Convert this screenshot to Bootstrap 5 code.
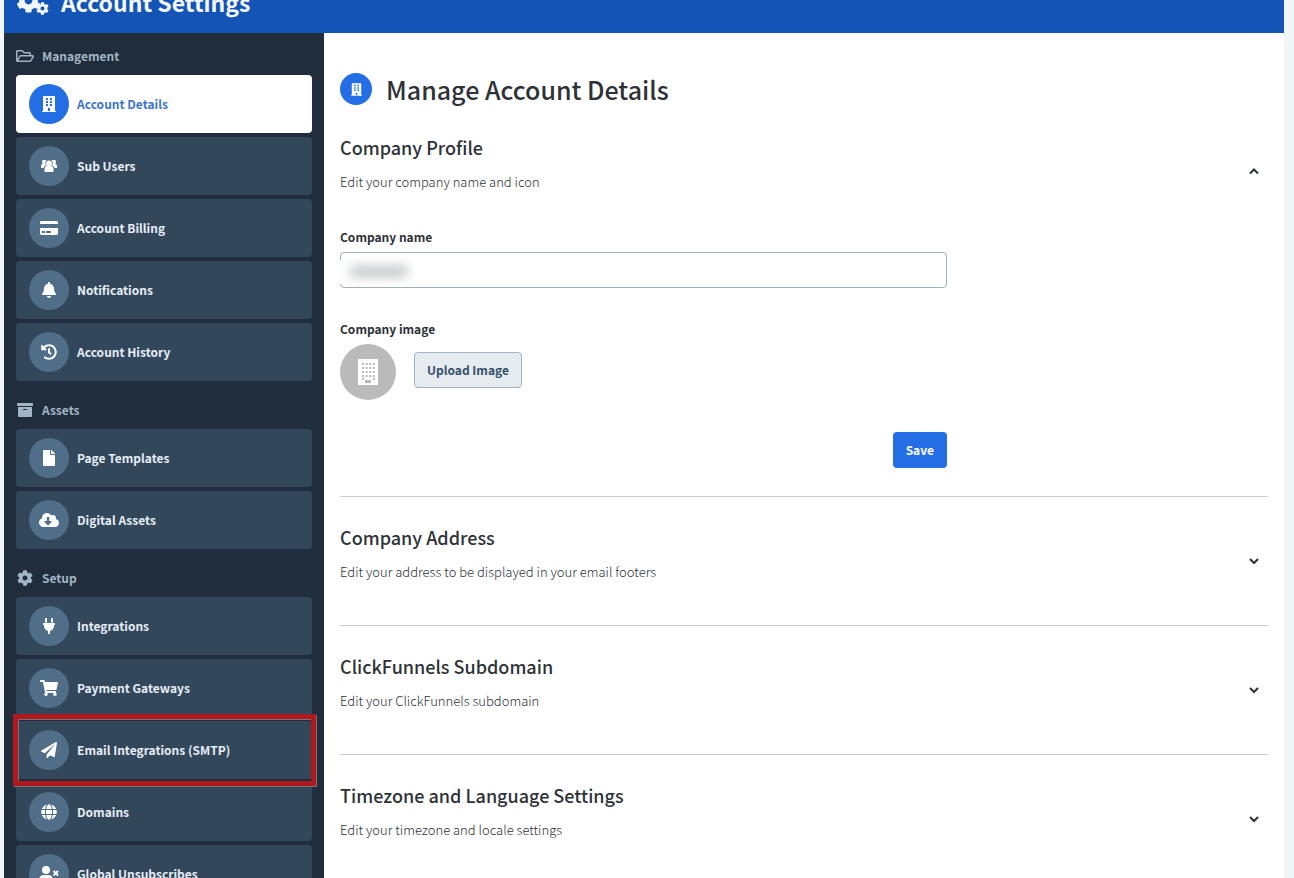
<!DOCTYPE html>
<html lang="en">
<head>
<meta charset="utf-8">
<meta name="viewport" content="width=device-width, initial-scale=1">
<title>Account Settings</title>
<link href="https://cdn.jsdelivr.net/npm/bootstrap@5.3.0/dist/css/bootstrap.min.css" rel="stylesheet">
<style>
  body { background: #f1f7f9; color: #2d3237; font: 400 12px/20px "Source Sans Pro", "Noto Sans CJK SC", sans-serif; }
  svg { fill: currentColor; flex: none; }
  .app-shell { margin: 0 10px 0 4px; background: #fff; }
  .app-header { height: 33px; background: #1554b7; color: #f4f9ff; padding: 0 13px 17px; overflow: hidden; }
  .app-title { font-size: 23px; line-height: 28px; font-weight: 700; }
  .side-panel { width: 320px; background: #1f2d3d; padding: 4px 12px 0; }
  .side-group { margin-bottom: 10px; }
  .side-label { height: 38px; font-weight: 700; color: #a3b5c4; gap: 8px; }
  .side-label svg { width: 18px; height: 16px; }
  .side-list { gap: 4px; }
  .side-link { height: 58px; padding: 0 13px; gap: 8px; border-radius: 4px; background: #33475b; color: #e4edf6; font-weight: 700; text-decoration: none; }
  .side-link:hover { color: #fff; }
  .side-link.active { background: #fff; color: #3b76cc; }
  .icon-disc { width: 40px; height: 40px; background: #506e88; color: #fff; }
  .icon-disc svg { height: 16px; width: 20px; }
  .active .icon-disc, .title-disc { background: #236ee4; }
  .callout-frame { inset: -7px -4px -7px -3px; border: 5px solid #b01a1e; box-shadow: 1px 1px 0 #7b7377, inset 1px 1px 0 #7b7377; pointer-events: none; z-index: 1; }
  .main-panel { padding: 40px 16px 0; min-width: 0; }
  .title-row { gap: 14px; margin-bottom: 2px; }
  .title-disc { width: 32px; height: 32px; color: #fff; }
  .page-title { font-size: 25px; line-height: 32px; font-weight: 500; }
  .fold { padding: 8px 0; border-top: 1px solid #cbcdd0; }
  .fold:first-of-type { border-top: 0; padding-bottom: 28px; }
  .fold-toggle { height: 112px; padding: 18px 8px 0 0; color: inherit; }
  .fold-title { font-size: 18px; line-height: 28px; font-weight: 500; margin-bottom: 11px; }
  .fold-note { font-size: 13px; line-height: 20px; font-weight: 300; }
  .fold-toggle svg { margin-top: 32px; }
  .profile-form { max-width: 607px; }
  .field-label { font-weight: 700; margin-bottom: 5px; }
  .field-wrap { margin-bottom: 31px; }
  .field-box { height: 36px; border: 1px solid #9fb0bd; border-radius: 4px; font-size: 12px; }
  .redacted { left: -2px; top: 8px; width: 76px; height: 24px; background: #fcfdfd; }
  .redacted::after { content: ""; position: absolute; inset: 5px 6px 6px 12px; border-radius: 6px; background: #cdcfd1; filter: blur(5px); }
  .image-row { gap: 18px; margin-bottom: 32px; }
  .avatar { width: 56px; height: 56px; background: #bababa; color: #fff; }
  .btn-field { height: 36px; border-radius: 4px; font-size: 12px; line-height: 20px; padding: 0 12px; font-weight: 700; }
  .btn-upload, .btn-upload:hover { background: #e6ebf0; border: 1px solid #9fb4c5; color: #33506b; }
  .btn-save, .btn-save:hover { background: #236ee4; color: #fff; }
</style>
</head>
<body>
<svg class="d-none" aria-hidden="true">
  <symbol id="cog" viewBox="0 0 512 512"><path d="M487.4 315.7l-42.6-24.6c4.3-23.2 4.3-47 0-70.2l42.6-24.6c4.9-2.8 7.1-8.6 5.5-14-11.1-35.6-30-67.8-54.7-94.6-3.8-4.1-10-5.1-14.8-2.3L380.8 110c-17.9-15.4-38.5-27.3-60.8-35.1V25.8c0-5.6-3.9-10.5-9.4-11.7-36.7-8.2-74.3-7.8-109.2 0-5.5 1.2-9.4 6.1-9.4 11.7V75c-22.2 7.9-42.8 19.8-60.8 35.1L88.7 85.5c-4.9-2.8-11-1.9-14.8 2.3-24.7 26.7-43.6 58.9-54.7 94.6-1.7 5.4.6 11.2 5.5 14L67.3 221c-4.3 23.2-4.3 47 0 70.2l-42.6 24.6c-4.9 2.8-7.1 8.6-5.5 14 11.1 35.6 30 67.8 54.7 94.6 3.8 4.1 10 5.1 14.8 2.3l42.6-24.6c17.9 15.4 38.5 27.3 60.8 35.1v49.2c0 5.6 3.9 10.5 9.4 11.7 36.7 8.2 74.3 7.8 109.2 0 5.5-1.2 9.4-6.1 9.4-11.7v-49.2c22.2-7.9 42.8-19.8 60.8-35.1l42.6 24.6c4.9 2.8 11 1.9 14.8-2.3 24.7-26.7 43.6-58.9 54.7-94.6 1.5-5.5-.7-11.3-5.6-14.1zM256 336c-44.1 0-80-35.9-80-80s35.9-80 80-80 80 35.9 80 80-35.9 80-80 80z"/></symbol>
  <symbol id="building" viewBox="0 0 448 512"><path fill-rule="evenodd" d="M436 480h-20V24c0-13.3-10.700-24-24-24H56C42.700 0 32 10.700 32 24v456H12c-6.600 0-12 5.400-12 12v20h448v-20c0-6.600-5.400-12-12-12zM128 64h64v64h-64zM256 64h64v64h-64zM128 160h64v64h-64zM256 160h64v64h-64zM128 256h64v64h-64zM256 256h64v64h-64zM192 384h64v96h-64z"/></symbol>
</svg>

<div class="app-shell vh-100 overflow-hidden d-flex flex-column">
  <header class="app-header d-flex align-items-end flex-shrink-0">
    <div class="d-flex align-items-center">
      <svg width="44" height="28" viewBox="0 0 44 28" aria-hidden="true"><use href="#cog" x="-1" y="0" width="25" height="25"/><use href="#cog" x="19" y="-2" width="13" height="13"/><use href="#cog" x="19" y="14" width="13" height="13"/></svg>
      <span class="app-title">Account Settings</span>
    </div>
  </header>
  <div class="d-flex flex-grow-1">
    <nav class="side-panel flex-shrink-0" aria-label="Settings">
      <div class="side-group">
        <div class="side-label d-flex align-items-center"><svg viewBox="0 0 576 512"><path d="M527.900 224H480v-48c0-26.500-21.500-48-48-48H272l-64-64H48C21.500 64 0 85.500 0 112v288c0 26.500 21.500 48 48 48h400c16.500 0 31.900-8.500 40.700-22.600l79.900-128c20-31.900-3-73.400-40.700-73.400zM48 118c0-3.300 2.700-6 6-6h134.100l64 64H426c3.300 0 6 2.700 6 6v42H152c-16.800 0-32.400 8.800-41.100 23.200L48 351.400zm400 282H72l77.200-128H528z"/></svg>Management</div>
        <div class="side-list d-flex flex-column">
          <a href="#" class="side-link active d-flex align-items-center" aria-current="page"><span class="icon-disc rounded-circle d-flex align-items-center justify-content-center"><svg><use href="#building"/></svg></span>Account Details</a>
          <a href="#" class="side-link d-flex align-items-center"><span class="icon-disc rounded-circle d-flex align-items-center justify-content-center"><svg viewBox="0 0 20 16"><path d="M3 3.500C3 2 4 2 5 2h2.500C6 3.500 6 6 7 7.500c-1 .5-2.500 1-2.500 2.500H2V7l1.500-1zM17 3.500C17 2 16 2 15 2h-2.500C14 3.500 14 6 13 7.500c1 .5 2.500 1 2.500 2.500H18V7l-1.500-1z"/><circle cx="10" cy="5.500" r="3"/><path d="M7.500 8h5c1.500.5 2 1.500 2 3v3h-9v-3c0-1.500.5-2.500 2-3z"/></svg></span>Sub Users</a>
          <a href="#" class="side-link d-flex align-items-center"><span class="icon-disc rounded-circle d-flex align-items-center justify-content-center"><svg viewBox="0 0 576 512"><path d="M0 432c0 26.500 21.500 48 48 48h480c26.500 0 48-21.500 48-48V256H0v176zm192-68c0-6.600 5.400-12 12-12h136c6.600 0 12 5.400 12 12v40c0 6.600-5.400 12-12 12H204c-6.600 0-12-5.400-12-12v-40zm-128 0c0-6.600 5.400-12 12-12h72c6.600 0 12 5.400 12 12v40c0 6.600-5.400 12-12 12H76c-6.600 0-12-5.400-12-12v-40zM576 80v48H0V80c0-26.500 21.500-48 48-48h480c26.500 0 48 21.500 48 48z"/></svg></span>Account Billing</a>
          <a href="#" class="side-link d-flex align-items-center"><span class="icon-disc rounded-circle d-flex align-items-center justify-content-center"><svg viewBox="0 0 448 512"><path d="M224 512c35.320 0 63.970-28.650 63.970-64H160.030c0 35.350 28.650 64 63.970 64zm215.390-149.710c-19.320-20.760-55.470-51.990-55.470-154.290 0-77.700-54.480-139.900-127.940-155.160V32c0-17.670-14.320-32-31.980-32s-31.980 14.330-31.980 32v20.840C118.560 68.100 64.080 130.300 64.080 208c0 102.300-36.150 133.530-55.470 154.290-6 6.450-8.660 14.160-8.610 21.710.11 16.400 12.980 32 32.100 32h383.800c19.120 0 32-15.600 32.100-32 .05-7.550-2.610-15.270-8.610-21.710z"/></svg></span>Notifications</a>
          <a href="#" class="side-link d-flex align-items-center"><span class="icon-disc rounded-circle d-flex align-items-center justify-content-center"><svg viewBox="0 0 512 512"><path d="M504 255.531c.253 136.640-111.180 248.372-247.820 248.468-59.015.042-113.223-20.530-155.822-54.911-11.077-8.940-11.905-25.541-1.839-35.607l11.267-11.267c8.609-8.609 22.353-9.551 31.891-1.984C173.062 425.135 212.781 440 256 440c101.705 0 184-82.311 184-184 0-101.705-82.311-184-184-184-48.814 0-93.149 18.969-126.068 49.932l50.754 50.754c10.080 10.080 2.941 27.314-11.313 27.314H24c-8.837 0-16-7.163-16-16V38.627c0-14.254 17.234-21.393 27.314-11.314l49.372 49.372C129.209 34.136 189.552 8 256 8c136.810 0 247.747 110.780 248 247.531zm-180.912 78.784l9.823-12.630c8.138-10.463 6.253-25.542-4.210-33.679L288 256.349V152c0-13.255-10.745-24-24-24h-16c-13.255 0-24 10.745-24 24v135.651l65.409 50.874c10.463 8.137 25.541 6.253 33.679-4.210z"/></svg></span>Account History</a>
        </div>
      </div>
      <div class="side-group">
        <div class="side-label d-flex align-items-center"><svg viewBox="0 0 512 512"><path d="M32 448c0 17.700 14.300 32 32 32h384c17.700 0 32-14.300 32-32V160H32v288zm160-212c0-6.600 5.400-12 12-12h104c6.600 0 12 5.400 12 12v8c0 6.600-5.400 12-12 12H204c-6.600 0-12-5.400-12-12v-8zM480 32H32C14.300 32 0 46.300 0 64v48c0 8.800 7.200 16 16 16h480c8.800 0 16-7.200 16-16V64c0-17.700-14.300-32-32-32z"/></svg>Assets</div>
        <div class="side-list d-flex flex-column">
          <a href="#" class="side-link d-flex align-items-center"><span class="icon-disc rounded-circle d-flex align-items-center justify-content-center"><svg viewBox="0 0 384 512"><path d="M224 136V0H24C10.700 0 0 10.700 0 24v464c0 13.300 10.700 24 24 24h336c13.300 0 24-10.700 24-24V160H248c-13.200 0-24-10.800-24-24zm160-14.100v6.100H256V0h6.100c6.400 0 12.500 2.500 17 7l97.900 98c4.500 4.500 7 10.600 7 16.900z"/></svg></span>Page Templates</a>
          <a href="#" class="side-link d-flex align-items-center"><span class="icon-disc rounded-circle d-flex align-items-center justify-content-center"><svg viewBox="0 0 640 512"><path d="M537.600 226.600c4.100-10.700 6.400-22.400 6.400-34.600 0-53-43-96-96-96-19.700 0-38.100 6-53.300 16.200C367 64.200 315.300 32 256 32c-88.400 0-160 71.600-160 160 0 2.700.1 5.400.2 8.100C40.200 219.800 0 273.200 0 336c0 79.500 64.500 144 144 144h368c70.700 0 128-57.300 128-128 0-61.900-44-113.600-102.400-125.400zm-132.900 88.700L299.300 420.700c-6.200 6.200-16.400 6.200-22.600 0L171.300 315.300c-10.100-10.100-2.900-27.300 11.300-27.300H248V176c0-8.800 7.200-16 16-16h48c8.800 0 16 7.200 16 16v112h65.400c14.200 0 21.400 17.200 11.300 27.300z"/></svg></span>Digital Assets</a>
        </div>
      </div>
      <div class="side-group">
        <div class="side-label d-flex align-items-center"><svg><use href="#cog"/></svg>Setup</div>
        <div class="side-list d-flex flex-column">
          <a href="#" class="side-link d-flex align-items-center"><span class="icon-disc rounded-circle d-flex align-items-center justify-content-center"><svg viewBox="0 0 384 512"><path d="M256 144V32c0-17.673 14.327-32 32-32s32 14.327 32 32v112h-64zm112 16H16c-8.837 0-16 7.163-16 16v32c0 8.837 7.163 16 16 16h16v32c0 77.406 54.969 141.971 128 156.796V512h64v-99.204c73.031-14.825 128-79.390 128-156.796v-32h16c8.837 0 16-7.163 16-16v-32c0-8.837-7.163-16-16-16zm-240-16V32c0-17.673-14.327-32-32-32S64 14.327 64 32v112h64z"/></svg></span>Integrations</a>
          <a href="#" class="side-link d-flex align-items-center"><span class="icon-disc rounded-circle d-flex align-items-center justify-content-center"><svg viewBox="0 0 576 512"><path d="M528.120 301.319l47.273-208C578.806 78.301 567.391 64 551.990 64H159.208l-9.166-44.810C147.758 8.021 137.930 0 126.529 0H24C10.745 0 0 10.745 0 24v16c0 13.255 10.745 24 24 24h69.883l70.248 343.435C147.325 417.100 136 435.222 136 456c0 30.928 25.072 56 56 56s56-25.072 56-56c0-15.674-6.447-29.835-16.824-40h209.647C430.447 426.165 424 440.326 424 456c0 30.928 25.072 56 56 56s56-25.072 56-56c0-22.172-12.888-41.332-31.579-50.405l5.517-24.276c3.413-15.018-8.002-29.319-23.403-29.319H218.117l-6.545-32h293.145c11.206 0 20.920-7.754 23.403-18.681z"/></svg></span>Payment Gateways</a>
          <a href="#" class="side-link position-relative d-flex align-items-center"><span class="icon-disc rounded-circle d-flex align-items-center justify-content-center"><svg viewBox="0 0 512 512"><path d="M476 3.200L12.500 270.600c-18.100 10.400-15.800 35.600 2.200 43.200L121 358.400l287.300-253.200c5.500-4.900 13.300 2.600 8.600 8.300L176 407v80.500c0 23.600 28.500 32.900 42.500 15.800L282 426l124.600 52.200c14.200 6 30.400-2.900 33-18.200l72-432C515 7.800 493.300-6.800 476 3.200z"/></svg></span>Email Integrations (SMTP)<span class="callout-frame position-absolute"></span></a>
          <a href="#" class="side-link d-flex align-items-center"><span class="icon-disc rounded-circle d-flex align-items-center justify-content-center"><svg viewBox="0 0 496 512"><path d="M336.500 160C322 70.700 287.800 8 248 8s-74 62.700-88.500 152h177zM152 256c0 22.200 1.200 43.500 3.300 64h185.300c2.100-20.500 3.300-41.800 3.300-64s-1.200-43.500-3.300-64H155.300c-2.100 20.500-3.300 41.800-3.300 64zm324.700-96c-28.600-67.900-86.500-120.400-158-141.600 24.400 33.800 41.200 84.700 50 141.600h108zM177.200 18.400C105.800 39.600 47.800 92.100 19.300 160h108c8.700-56.900 25.500-107.800 49.900-141.600zM487.400 192H372.700c2.100 21 3.300 42.500 3.300 64s-1.200 43-3.300 64h114.600c5.500-20.500 8.600-41.800 8.600-64s-3.100-43.500-8.500-64zM120 256c0-21.500 1.200-43 3.300-64H8.600C3.200 212.500 0 233.800 0 256s3.200 43.500 8.600 64h114.600c-2-21-3.200-42.500-3.200-64zm39.500 96c14.500 89.300 48.700 152 88.500 152s74-62.700 88.500-152h-177zm159.300 141.600c71.400-21.200 129.400-73.700 158-141.600h-108c-8.800 56.900-25.600 107.800-50 141.600zM19.300 352c28.600 67.900 86.500 120.400 158 141.600-24.400-33.800-41.200-84.700-50-141.600h-108z"/></svg></span>Domains</a>
          <a href="#" class="side-link d-flex align-items-center"><span class="icon-disc rounded-circle d-flex align-items-center justify-content-center"><svg viewBox="0 0 20 16"><circle cx="7" cy="4" r="4"/><path d="M0 16v-2c0-3 2-5 4.500-5h5c2.500 0 4.500 2 4.500 5v2z"/><path d="M14.500 5l4.500 4.500M19 5l-4.500 4.500" stroke="currentColor" stroke-width="2"/></svg></span>Global Unsubscribes</a>
        </div>
      </div>
    </nav>
    <main class="main-panel flex-grow-1">
      <div class="title-row d-flex align-items-center">
        <span class="title-disc rounded-circle d-flex align-items-center justify-content-center"><svg width="11" height="13"><use href="#building"/></svg></span>
        <h1 class="page-title mb-0">Manage Account Details</h1>
      </div>
      <section class="fold">
        <button type="button" class="fold-toggle btn border-0 w-100 d-flex align-items-start justify-content-between text-start" aria-expanded="true" aria-controls="profile">
          <span><span class="fold-title d-block">Company Profile</span><span class="fold-note d-block">Edit your company name and icon</span></span>
          <svg width="12" height="12" viewBox="0 0 12 12"><path d="M2 8.500l4-4 4 4" fill="none" stroke="currentColor" stroke-width="2"/></svg>
        </button>
        <form id="profile" class="profile-form">
          <label class="field-label d-block" for="company">Company name</label>
          <div class="field-wrap position-relative">
            <input id="company" type="text" class="field-box form-control">
            <span class="redacted position-absolute"></span>
          </div>
          <label class="field-label d-block" for="upload">Company image</label>
          <div class="image-row d-flex align-items-start">
            <span class="avatar rounded-circle d-flex align-items-center justify-content-center"><svg width="22" height="28" viewBox="0 0 22 28"><path d="M2 1h18a1 1 0 0 1 1 1v25H1V2a1 1 0 0 1 1-1z"/><path d="M5 6h13M5 10h13M5 14h13M5 18h13" stroke="#bababa" stroke-width="2" stroke-dasharray="2 1.600"/><path fill="#bababa" d="M5 20h2v2H5zM16 20h2v2h-2zM8 22h6v3H8z"/></svg></span>
            <button type="button" id="upload" class="btn btn-field btn-upload mt-2">Upload Image</button>
          </div>
          <div class="d-flex justify-content-end"><button type="submit" class="btn btn-field btn-save">Save</button></div>
        </form>
      </section>
      <section class="fold">
        <button type="button" class="fold-toggle btn border-0 w-100 d-flex align-items-start justify-content-between text-start" aria-expanded="false">
          <span><span class="fold-title d-block">Company Address</span><span class="fold-note d-block">Edit your address to be displayed in your email footers</span></span>
          <svg width="12" height="12" viewBox="0 0 12 12"><path d="M2 4l4 4 4-4" fill="none" stroke="currentColor" stroke-width="2"/></svg>
        </button>
      </section>
      <section class="fold">
        <button type="button" class="fold-toggle btn border-0 w-100 d-flex align-items-start justify-content-between text-start" aria-expanded="false">
          <span><span class="fold-title d-block">ClickFunnels Subdomain</span><span class="fold-note d-block">Edit your ClickFunnels subdomain</span></span>
          <svg width="12" height="12" viewBox="0 0 12 12"><path d="M2 4l4 4 4-4" fill="none" stroke="currentColor" stroke-width="2"/></svg>
        </button>
      </section>
      <section class="fold">
        <button type="button" class="fold-toggle btn border-0 w-100 d-flex align-items-start justify-content-between text-start" aria-expanded="false">
          <span><span class="fold-title d-block">Timezone and Language Settings</span><span class="fold-note d-block">Edit your timezone and locale settings</span></span>
          <svg width="12" height="12" viewBox="0 0 12 12"><path d="M2 4l4 4 4-4" fill="none" stroke="currentColor" stroke-width="2"/></svg>
        </button>
      </section>
    </main>
  </div>
</div>
<script src="https://cdn.jsdelivr.net/npm/bootstrap@5.3.0/dist/js/bootstrap.bundle.min.js"></script>
</body>
</html>
